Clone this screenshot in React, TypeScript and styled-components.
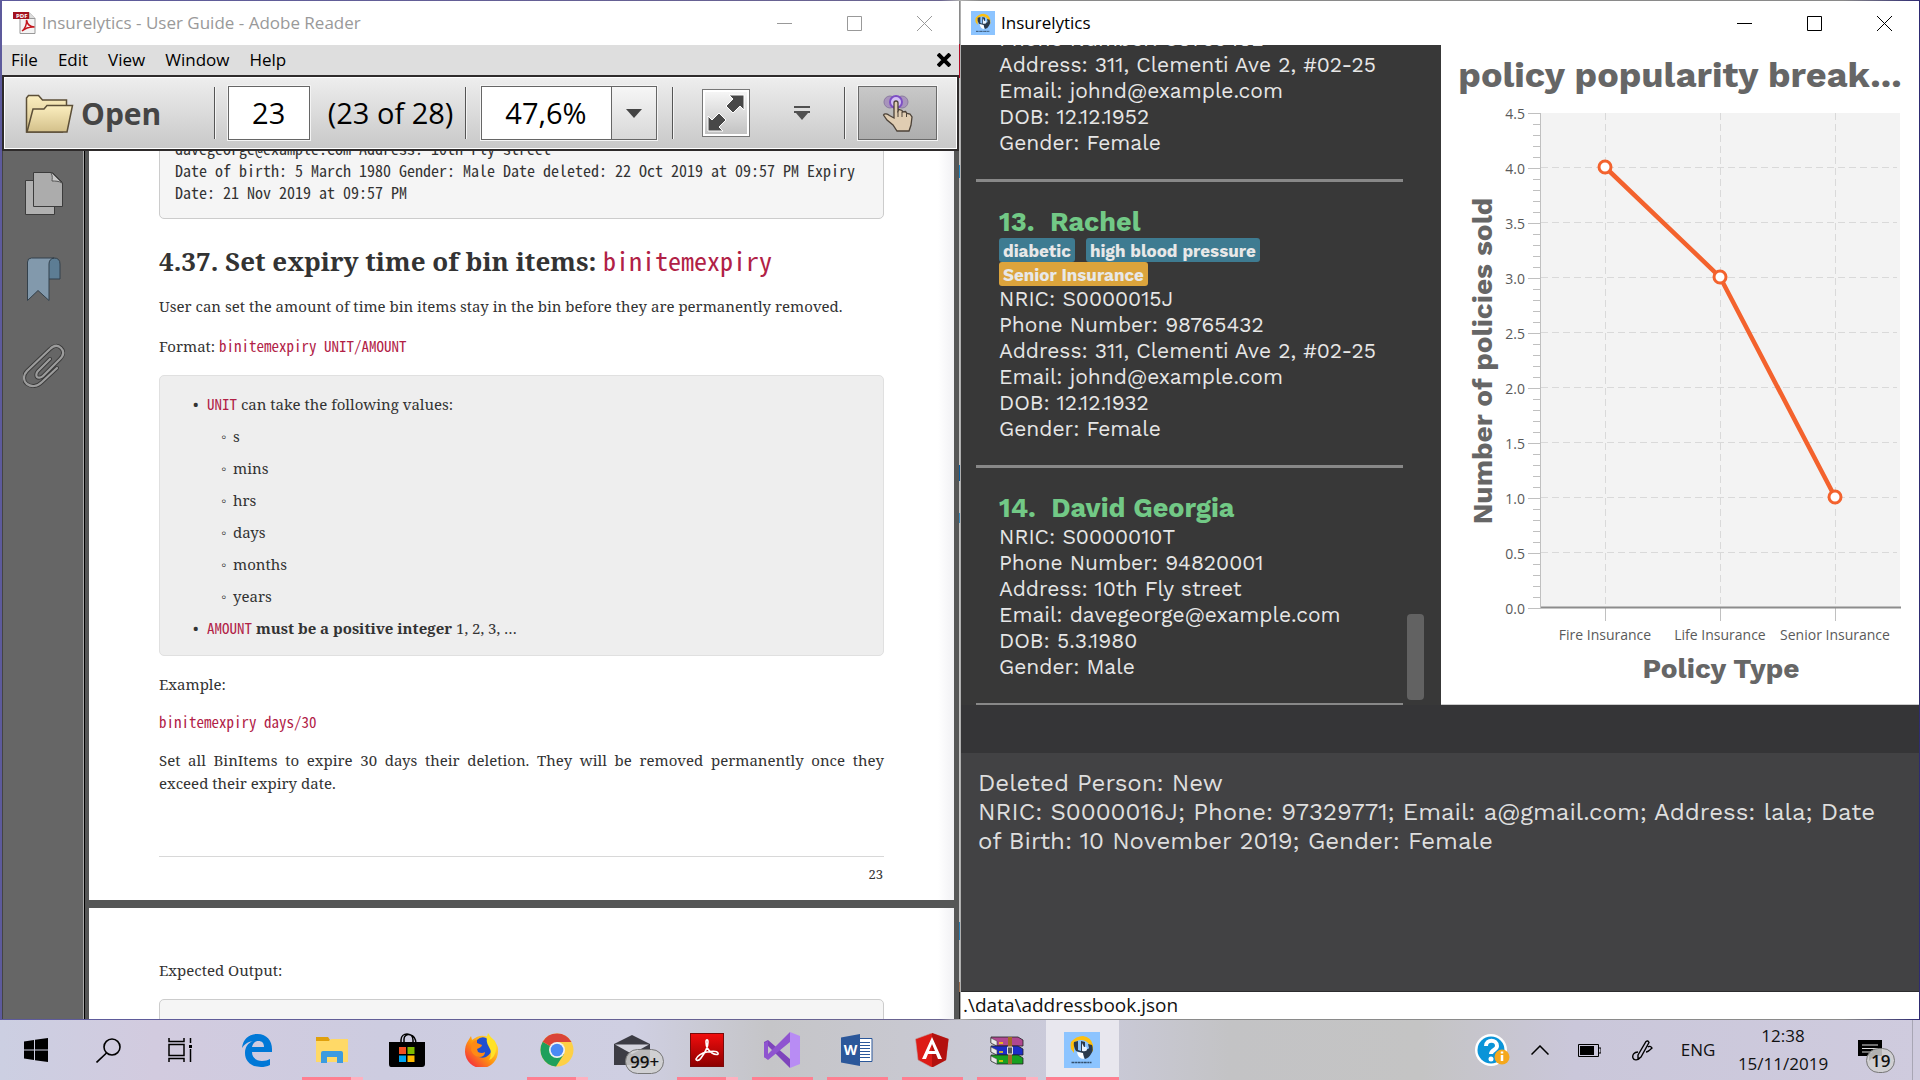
import React from 'react';
import styled, { createGlobalStyle, css } from 'styled-components';

const ui = '"Segoe UI", "Open Sans", "Noto Sans", sans-serif';
const work = '"Work Sans", Inter, "Open Sans", sans-serif';
const serif = '"Noto Serif", "Liberation Serif", serif';
const mono = '"Noto Sans Mono CJK JP", "Liberation Mono", monospace';

const GlobalStyle = createGlobalStyle`
  *, *::before, *::after { box-sizing: border-box; }
  body { margin: 0; font-family: ${ui}; overflow: hidden; }
  button, input, select { font: inherit; color: inherit; margin: 0; }
  h1, h2, h3, p, ul, pre, dl, dd { margin: 0; padding: 0; }
  button { background: none; border: 0; padding: 0; }
  svg { display: block; flex: none; }
`;

/* ---------- desktop ---------- */

const Desktop = styled.div`
  height: 100vh;
  display: flex;
  flex-direction: column;
  background: #4a4690;
`;

const Workspace = styled.main`
  flex: 1;
  min-height: 0;
  display: grid;
  grid-template-columns: minmax(0, 1fr) minmax(0, 1fr);
  gap: 1px;
  padding: 1px 1px 1px 2px;
  background: linear-gradient(90deg, #5d5a9c, #6a6490 49%, #b0b0b0 50%, #8a8a8a 51%, #8a8a8a 96%, #2e2a72);
`;

const Window = styled.section`
  min-width: 0;
  min-height: 0;
  display: flex;
  flex-direction: column;
  background: #fff;
`;

const TitleBar = styled.header<{ $active?: boolean }>`
  flex: none;
  height: 44px;
  display: flex;
  align-items: center;
  background: #fff;
  color: ${(p) => (p.$active ? '#000' : '#999')};
`;

const TitleText = styled.h1`
  flex: 1;
  font-size: 17px;
  line-height: 24px;
  font-weight: 400;
`;

const TitleIcon = styled.span`
  display: flex;
  margin: 0 6px 0 10px;
`;

const CaptionButton = styled.button`
  width: 70px;
  height: 44px;
  display: flex;
  align-items: center;
  justify-content: center;
`;

function CaptionButtons() {
  return (
    <>
      <CaptionButton aria-label="Minimize">
        <svg width="15" height="15" viewBox="0 0 15 15" stroke="currentColor"><path d="M0 7.5h15" /></svg>
      </CaptionButton>
      <CaptionButton aria-label="Maximize">
        <svg width="15" height="15" viewBox="0 0 15 15" fill="none" stroke="currentColor"><path d="M.5.5h14v14H.5z" /></svg>
      </CaptionButton>
      <CaptionButton aria-label="Close">
        <svg width="15" height="15" viewBox="0 0 15 15" stroke="currentColor"><path d="M0 0l15 15M15 0L0 15" /></svg>
      </CaptionButton>
    </>
  );
}

/* ---------- reader window ---------- */

const ReaderWindow = styled(Window)`
  border-right: 1px solid #b4b4b4;
  border-image: linear-gradient(#8a8a8a 0 44px, #b00a24 44px 78px, #c4c4c4 78px 165px, #1e88c8 165px 178px,
    #c4c4c4 178px 464px, #0a5c9c 464px 480px, #c4c4c4 480px 512px, #3a8cc0 512px 522px, #c4c4c4 522px 920px,
    #2a80b8 920px 938px, #c4c4c4 938px 980px, #a07050 980px 990px, #222 990px) 1;
`;

const MenuBar = styled.nav`
  flex: none;
  height: 30px;
  display: flex;
  align-items: center;
  background: #dedede;
  padding: 0 8px 0 9px;
  gap: 20px;
`;

const MenuItem = styled.button`
  font-size: 17px;
  line-height: 24px;
  color: #000;
`;

const MenuClose = styled.button`
  margin-left: auto;
`;

const Toolbar = styled.div`
  flex: none;
  height: 76px;
  display: flex;
  align-items: center;
  border: 2px solid #2e2b2b;
  box-shadow: inset 0 0 0 1px #fff;
  background: linear-gradient(#eeeeee, #c8c8c8);
  padding: 0 20px 0 21px;
`;

const Separator = styled.span`
  width: 2px;
  height: 52px;
  border-left: 1px solid #555;
  border-right: 1px solid #f4f4f4;
`;

const OpenButton = styled.button`
  width: 189px;
  display: flex;
  align-items: center;
  gap: 7px;
  padding-top: 2px;
  font-size: 30px;
  line-height: 40px;
  font-weight: 700;
  color: #454545;
`;

const PageInput = styled.input`
  width: 82px;
  height: 54px;
  margin: 0 18px 0 12px;
  border: 1px solid #666;
  outline: 1px solid #f4f4f4;
  border-radius: 0;
  padding: 0 0 2px;
  background: #fff;
  text-align: center;
  font-size: 29px;
  line-height: 40px;
  color: #000;
`;

const PageCount = styled.span`
  width: 138px;
  font-size: 29px;
  line-height: 40px;
  color: #000;
  white-space: nowrap;
`;

const ZoomGroup = styled.div`
  display: flex;
  width: 176px;
  height: 54px;
  margin: 0 15px 0 14px;
  border: 1px solid #666;
  outline: 1px solid #f4f4f4;
`;

const ZoomSelect = styled.select`
  width: 129px;
  border: 0;
  border-radius: 0;
  appearance: none;
  background: #fff;
  text-align: center;
  font-size: 29px;
  padding: 0 2px 2px 0;
  color: #000;
`;

const ZoomArrow = styled.button`
  flex: 1;
  display: flex;
  align-items: center;
  justify-content: center;
  border-left: 1px solid #666;
  background: linear-gradient(#f6f6f6, #d8d8d8);
`;

const FitButton = styled.button`
  width: 48px;
  height: 48px;
  margin: 0 43px 0 28px;
  display: flex;
  align-items: center;
  justify-content: center;
  border: 1px solid #777;
  box-shadow: inset 0 0 0 2px #fff;
  background: linear-gradient(#f8f8f8, #c0c0c0);
`;

const MoreButton = styled.button`
  margin-right: 33px;
`;

const TouchButton = styled.button`
  width: 79px;
  height: 54px;
  margin-left: 12px;
  display: flex;
  align-items: center;
  justify-content: center;
  border: 1px solid #6a6a6a;
  outline: 1px solid #f4f4f4;
  background: linear-gradient(#c8c8c8, #adadad);
`;

const ReaderBody = styled.div`
  flex: 1;
  min-height: 0;
  display: flex;
  background: #555656;
`;

const SideRail = styled.aside`
  flex: none;
  width: 83px;
  display: flex;
  flex-direction: column;
  align-items: center;
  gap: 42px;
  padding: 20px 0 0;
  background: #666;
  border-right: 1px solid #000;
  border-left: 1px solid #444;
  box-shadow: inset -1px 0 0 #aaa;
`;

const Pages = styled.div`
  flex: 1;
  min-width: 0;
  margin: 0 5px 0 4px;
  overflow: hidden;
  display: flex;
  flex-direction: column;
  gap: 8px;
`;

const Sheet = styled.article<{ $top?: number }>`
  flex: none;
  padding: ${(p) => p.$top ?? 0}px 70px 0;
  background: linear-gradient(270deg, #f1f1f4, #fff 16px);
  color: #333;
  font-family: ${serif};
  font-size: 15px;
  line-height: 23px;
`;

const CodeBlock = styled.pre<{ $open?: boolean }>`
  font-family: ${mono};
  font-size: 16px;
  line-height: 22px;
  border: 1px solid #ccc;
  border-radius: 5px;
  background: #f5f5f5;
  padding: 14px 15px 15px;
  ${(p) => (p.$open ? css`margin-top: 17px; min-height: 60px;` : css`margin-top: -29px;`)}
`;

const SectionTitle = styled.h2`
  margin-top: 22px;
  font-size: 26px;
  line-height: 40px;
  font-weight: 700;
`;

const Code = styled.code<{ $size?: number }>`
  font-family: ${mono};
  font-size: ${(p) => p.$size ?? 15}px;
  font-weight: 400;
  line-height: 1;
  color: #b12146;
`;

const Para = styled.p<{ $gap: number }>`
  margin-top: ${(p) => p.$gap}px;
  text-align: justify;
`;

const Note = styled.div`
  margin-top: 17px;
  padding: 12px 15px 11px;
  border: 1px solid #e0e0e0;
  border-radius: 5px;
  background: #eeeeee;
`;

const Bullets = styled.ul<{ $mark: string; $indent: number }>`
  list-style: none;
  line-height: 32px;
  padding-left: ${(p) => p.$indent}px;
  & > li { display: grid; grid-template-columns: ${(p) => (p.$mark === '•' ? 14 : 12)}px 1fr; }
  & > li::before { content: '${(p) => p.$mark}'; }
  & > li > ul { grid-column: 2; }
`;

const Footer = styled.footer`
  margin-top: 61px;
  padding: 6px 1px 14px;
  border-top: 1px solid #d8d8d8;
  text-align: right;
  font-size: 13px;
`;

/* ---------- insurelytics window ---------- */

const AppWindow = styled(Window)`
  background: #353537;
`;

const AppTop = styled.div`
  flex: none;
  display: grid;
  grid-template-columns: 480px minmax(0, 1fr);
  height: 660px;
`;

const PeoplePane = styled.div`
  display: flex;
  align-items: flex-end;
  min-height: 0;
  overflow: hidden;
  background: #383838;
  padding-left: 15px;
`;

const PeopleList = styled.ul`
  flex: none;
  width: 427px;
  list-style: none;
  margin-bottom: -1px;
`;

const PersonCard = styled.li`
  padding: 24px 23px 23px;
  border-bottom: 3px solid #888;
  font-family: ${work};
  font-size: 21px;
  line-height: 26px;
  color: #e6e6e6;
  white-space: nowrap;
`;

const PersonName = styled.h2`
  font-size: 27px;
  line-height: 32px;
  font-weight: 700;
  color: #72c986;
  white-space: pre;
`;

const TagRow = styled.div`
  display: flex;
  gap: 11px;
`;

const Tag = styled.span<{ $tone: string }>`
  height: 24px;
  padding: 0 4px;
  border-radius: 3px;
  background: ${(p) => p.$tone};
  font-size: 17px;
  line-height: 26px;
  font-weight: 700;
  color: #e8e8e8;
`;

const ScrollThumb = styled.span`
  width: 17px;
  height: 86px;
  margin: 0 0 5px 4px;
  border-radius: 4px;
  background: #626262;
`;

const ChartPane = styled.figure`
  margin: 0;
  padding-top: 10px;
  background: #fff;
  border-bottom: 1px solid #ccc;
  font-family: ${work};
  color: #666;
`;

const ChartTitle = styled.figcaption`
  height: 41px;
  font-size: 36px;
  line-height: 40px;
  font-weight: 700;
  text-align: center;
  white-space: nowrap;
`;

const Result = styled.output`
  flex: 1;
  margin-top: 48px;
  padding: 16px 17px;
  background: #424244;
  border-bottom: 1px solid #2c2c2e;
  font-family: ${work};
  font-size: 24px;
  line-height: 29px;
  color: #dedede;
  white-space: pre-line;
`;

const StatusBar = styled.footer`
  flex: none;
  height: 27px;
  padding-left: 2px;
  background: #fff;
  color: #111;
  font-size: 19px;
  line-height: 27px;
`;

const points = [
  { label: 'Fire Insurance', value: 4 },
  { label: 'Life Insurance', value: 3 },
  { label: 'Senior Insurance', value: 1 },
];

function PolicyChart() {
  const x0 = 100;
  const top = 17;
  const bottom = 512;
  const y = (v: number) => bottom - v * 110;
  const x = (i: number) => 164 + i * 115;
  const ticks = Array.from({ length: 46 }, (_, i) => i / 10);
  const majors = Array.from({ length: 10 }, (_, i) => i / 2);
  return (
    <svg width="100%" viewBox="0 0 478 600" role="img" aria-label="Policies sold by policy type">
      <rect x={x0} y={top} width="359" height={bottom - top} fill="#f3f3f3" />
      <g stroke="#d9d9d9" strokeDasharray="7 4">
        {majors.slice(1, 9).map((v) => <path key={v} d={`M${x0} ${y(v) - 0.5}H456`} />)}
        {points.map((p, i) => <path key={p.label} d={`M${x(i) + 0.5} ${top}V${bottom}`} />)}
      </g>
      <g stroke="#c0c0c0">
        <path d={`M${x0 - 0.5} ${top}V${bottom + 1}`} />
        {ticks.map((v, i) => <path key={v} d={`M${i % 5 ? 92 : 87} ${y(v) + 0.5}H${x0}`} />)}
        {points.map((p, i) => <path key={p.label} d={`M${x(i) + 0.5} ${bottom}v13`} />)}
      </g>
      <path d={`M${x0} ${bottom - 0.5}H460`} stroke="#8c8c8c" strokeWidth="2" />
      <g fontFamily={ui} fontSize="14" fill="#5a5a5a" textAnchor="end">
        {majors.map((v) => <text key={v} x="84" y={y(v) + 6}>{v.toFixed(1)}</text>)}
      </g>
      <g fontFamily={ui} fontSize="14" fill="#5a5a5a" textAnchor="middle">
        {points.map((p, i) => <text key={p.label} x={x(i)} y="544">{p.label}</text>)}
      </g>
      <path d={points.map((p, i) => `${i ? 'L' : 'M'}${x(i)} ${y(p.value) - 1}`).join('')} fill="none" stroke="#f3622d" strokeWidth="4.5" />
      {points.map((p, i) => <circle key={p.label} cx={x(i)} cy={y(p.value) - 1} r="6" fill="#fff" stroke="#f3622d" strokeWidth="3" />)}
      <g fontFamily={work} fontSize="28" fontWeight="700" fill="#666" textAnchor="middle">
        <text x="280" y="582">Policy Type</text>
        <text transform="translate(51 265) rotate(-90)">Number of policies sold</text>
      </g>
    </svg>
  );
}

/* ---------- taskbar ---------- */

const Taskbar = styled.footer`
  flex: none;
  height: 60px;
  display: flex;
  color: #111;
  background: linear-gradient(90deg, #cccfe2 0, #d2cbdf 8%, #cdcce0 20%, #cfcfe2 33%, #c5c5c8 40%, #c8c8d0 47%,
    #cbcbdc 56%, #c3c3c5 64%, #c4c4c4 74%, #cac7da 82%, #cfcbde 100%);
`;

const SystemButton = styled.button`
  width: 72px;
  display: flex;
  align-items: center;
  justify-content: center;
`;

const Apps = styled.div`
  display: flex;
  gap: 2px;
  margin-left: 5px;
`;

const AppButton = styled.button<{ $state?: 'open' | 'many' | 'active' }>`
  width: 73px;
  height: 60px;
  padding-right: 1px;
  display: flex;
  align-items: center;
  justify-content: center;
  position: relative;
  background: ${(p) => (p.$state === 'active' ? '#e8e7ee' : 'transparent')};
  &::after {
    content: '';
    position: absolute;
    bottom: 0;
    left: ${(p) => (p.$state === 'active' ? 0 : 6)}px;
    right: ${(p) => (p.$state === 'active' ? 0 : 6)}px;
    height: 3px;
    background: ${(p) =>
      !p.$state ? 'none' : p.$state === 'many' ? 'linear-gradient(90deg, #ff7f91 0 49px, #ffb0bf 49px)' : '#ff7f91'};
  }
`;

const Badge = styled.span<{ $left: number; $top: number }>`
  position: absolute;
  left: ${(p) => p.$left}px;
  top: ${(p) => p.$top}px;
  min-width: 28px;
  height: 25px;
  padding: 0 4px;
  border: 1px solid #777;
  border-radius: 13px;
  background: rgba(208, 208, 208, 0.85);
  font-size: 17px;
  line-height: 23px;
  font-weight: 600;
  color: #111;
`;

const Tray = styled.div`
  margin-left: auto;
  display: flex;
  align-items: center;
`;

const TrayButton = styled.button<{ $w: number; $end?: number }>`
  width: ${(p) => p.$w}px;
  height: 60px;
  padding-right: ${(p) => p.$end ?? 0}px;
  position: relative;
  display: flex;
  align-items: center;
  justify-content: center;
  font-size: 17px;
  line-height: 28px;
`;

const Clock = styled.time`
  width: 114px;
  padding-right: 6px;
  text-align: center;
  font-size: 17px;
  line-height: 28px;
`;

const ShowDesktop = styled.button`
  width: 8px;
  height: 60px;
  border-left: 1px solid #a8a6b4;
`;

/* ---------- icons ---------- */

function InsureLogo({ size }: { size: number }) {
  return (
    <svg width={size} height={size} viewBox="0 0 36 36">
      <rect width="36" height="36" fill="#8cc4ff" />
      <path d="M7 10Q12 4 19 4q8 1 10 9v6l-4 3V12q-3-4-8-4-5 0-7 4v9l-3-4q-1-4 0-7z" fill="#fdc010" />
      <path d="M10 10l4-1v9l3 1V9l4 1v7q3 1 4-1l-1-4 4 1q2 5-1 9-2 4-6 5l-3-6-6-2q-3-5-2-9z" fill="#2b3a4c" />
      <path d="M13 20l6 1 1 6q-6 0-7-7z" fill="#fff" />
      <path d="M18 11v8q5 1 5-2 0-3-3-2z" fill="#e8f3ff" />
      <path d="M7.500 30.500h20" stroke="#33506e" strokeWidth="1.500" strokeDasharray="3 .6 2 .5" />
    </svg>
  );
}

const PdfIcon = () => (
  <svg width="24" height="24" viewBox="0 0 24 24">
    <path d="M8 1.500h9l6 6v15H8z" fill="#f4f4f4" stroke="#999" />
    <path d="M17 1.500v6h6" fill="#ddd" stroke="#999" />
    <rect x="1" y="1" width="16" height="7" fill="#a3121f" />
    <text x="4" y="6.500" fontFamily={ui} fontSize="6" fontWeight="700" fill="#fff">PDF</text>
    <path d="M10 20c3-2 5-7 4.500-11 1 5 4 7 8 7-5-.5-9 1-12.500 4z" fill="none" stroke="#c4161c" strokeWidth="1.500" />
  </svg>
);

const FolderIcon = () => (
  <svg width="49" height="40" viewBox="0 0 49 40">
    <defs>
      <linearGradient id="fold" x1="0" y1="0" x2="0" y2="1"><stop stopColor="#fbeebf" /><stop offset="1" stopColor="#d3c08a" /></linearGradient>
    </defs>
    <path d="M1.500 38V4l2-2.500h10l4 4.500h24v8l-4 24z" fill="url(#fold)" stroke="#5c4f38" strokeWidth="1.500" />
    <path d="M2 38l6-23h11l3-3.500h25.500L42 38z" fill="url(#fold)" stroke="#5c4f38" strokeWidth="1.500" />
  </svg>
);

const FitIcon = () => (
  <svg width="38" height="38" viewBox="0 0 38 38" fill="#484848" stroke="#fff">
    <path d="M22 1h15v15l-4-4-7 7-7-7 7-7z" />
    <path d="M1 22l4 4 7-7 7 7-7 7 4 4H1z" />
  </svg>
);

const TouchIcon = () => (
  <svg width="32" height="38" viewBox="0 0 32 38">
    <circle cx="8" cy="8" r="6" fill="#a894bc" stroke="#8c7ca0" />
    <circle cx="20" cy="8" r="6" fill="#a894bc" stroke="#8c7ca0" />
    <circle cx="14" cy="8" r="6" fill="#d4bff4" stroke="#7d4fc4" strokeWidth="2" />
    <path d="M12 9a2 2 0 0 1 4 0v8l1-1.500 3 1 .5 1.500 3-.5 1.500 2 3 .5 2 3-1 8-2 6H15l-4-6-6-5-3.500-5c1-2 4-1 6 .5L12 24z" fill="#e0cdb2" stroke="#4c4238" strokeWidth="1.300" />
    <path d="M16 17v6M20 18v5M24.500 19v4" stroke="#4c4238" />
  </svg>
);

const PagesIcon = () => (
  <svg width="40" height="44" viewBox="0 0 40 44">
    <path d="M1.500 9.500h29v34h-29z" fill="#b0b0b0" stroke="#3c3c3c" />
    <path d="M9.500 1.500h19l10 10v24h-29z" fill="#acacac" stroke="#3c3c3c" />
    <path d="M27 2c2 3 1 6 1 8 3 0 7 0 10 2L28 2z" fill="#c8c8c8" stroke="#555" />
  </svg>
);

const BookmarkIcon = () => (
  <svg width="36" height="44" viewBox="0 0 36 44">
    <path d="M22 4q2-3 6-3 6 0 6 6v15H22z" fill="#5d7d94" stroke="#33414c" />
    <path d="M1.500 43.500V5q0-4 4-4H28q-5 1-5 6v36.500L12 33.500z" fill="#8299ac" stroke="#33414c" />
  </svg>
);

const ClipIcon = () => {
  const d = 'M34 25L19 39c-5 5-11 5-15 2s-4-9 0-13L27 6c4-4 8-4 11-1s3 7-1 11L20 33c-2 2-5 2-6 1s-1-4 1-6l12-12';
  return (
    <svg width="42" height="46" viewBox="0 0 42 46" fill="none" strokeLinecap="round">
      <path d={d} stroke="#3a3a3a" strokeWidth="4" />
      <path d={d} stroke="#9c9c9c" strokeWidth="2.200" />
    </svg>
  );
};

const EdgeIcon = () => (
  <svg width="32" height="34" viewBox="0 0 32 34">
    <path d="M1 15C2 6 8 1 16.500 1 26 1 31 8 31 16v3H11c0 6 5 9 10 9 3 0 6-1 8-2v6c-3 1.500-6 2-9 2C10 34 4 28 4 20c0-6 3-10 8-12-6 1-9 4-11 7zM11 14h12c0-4-2-6-5.500-6S12 10 11 14z" fill="#0078d7" />
  </svg>
);

const ExplorerIcon = () => (
  <svg width="34" height="28" viewBox="0 0 34 28">
    <path d="M1 1h12l2 3-2 3H1z" fill="#e0a00c" />
    <path d="M1 5h13l2-2h17v23H1z" fill="#ffd967" />
    <path d="M6 27V17q0-2 2-2h18q2 0 2 2v10h-6v-6h-10v6z" fill="#3c9be0" />
  </svg>
);

const StoreIcon = () => (
  <svg width="36" height="34" viewBox="0 0 36 34">
    <path d="M12 11V7c0-8 12-8 12 0v4M15 11V6c0-7 12-6 12 5" fill="none" stroke="#000" strokeWidth="1.500" />
    <path d="M0 9h36v22q0 3-3 3H2q-2 0-2-3z" fill="#000" />
    <path d="M10 14h7v7h-7z" fill="#f25022" /><path d="M18.500 14h7v7h-7z" fill="#7fba00" />
    <path d="M10 22.500h7v6.500h-7z" fill="#00a4ef" /><path d="M18.500 22.500h7v6.500h-7z" fill="#ffb900" />
  </svg>
);

const FirefoxIcon = () => (
  <svg width="34" height="34" viewBox="0 0 34 34">
    <defs>
      <linearGradient id="ff" x1="1" y1="0" x2="0" y2="1"><stop stopColor="#fff04c" /><stop offset=".5" stopColor="#ff980e" /><stop offset="1" stopColor="#f1104c" /></linearGradient>
    </defs>
    <path d="M3 8l3-5 1 4q10-8 20-1 7 6 6 12a16.500 16.500 0 0 1-33 1Q0 12 3 8z" fill="url(#ff)" />
    <path d="M12 7q4-4 9-2 5 3 6 8 0 8-6 11-6 2-10-2l-1-6 5-3-4-2z" fill="#1f4fd0" />
    <path d="M7 10q2-3 5-3l0 3 5 2q0 2-5 4l1 3q4 2 7 0 0 5-6 5-6-1-8-7z" fill="#ff8a16" />
    <path d="M23 0q2 4 7 8 3 8-1 15-2 3-5 4 4-7 0-13-4-6-1-14z" fill="#ffe226" />
  </svg>
);

const ChromeIcon = () => (
  <svg width="34" height="34" viewBox="0 0 34 34">
    <circle cx="17" cy="17" r="16.500" fill="#fdd046" />
    <path d="M17 17L2.700 8.800A16.500 16.500 0 0 0 16 33.500L24 21z" fill="#1fa05c" />
    <path d="M17 17L2.700 8.800A16.500 16.500 0 0 1 31.500 9H17z" fill="#da4437" />
    <circle cx="17" cy="17" r="8" fill="#f1f1f1" />
    <circle cx="17" cy="17" r="6.300" fill="#4a8af4" />
  </svg>
);

const MailIcon = () => (
  <svg width="36" height="30" viewBox="0 0 36 30">
    <path d="M0 9L18 0l18 9v21H0z" fill="#3c3c44" />
    <path d="M1 9.500h34L18 19z" fill="#d4d4de" />
  </svg>
);

const AcrobatIcon = () => (
  <svg width="34" height="34" viewBox="0 0 34 34">
    <defs><linearGradient id="acr" x1="0" y1="0" x2="0" y2="1"><stop stopColor="#f20d0d" /><stop offset="1" stopColor="#8c0000" /></linearGradient></defs>
    <rect x=".5" y=".5" width="33" height="33" fill="url(#acr)" stroke="#7a0a0a" />
    <path d="M6 26c2-4 6-6 11-7s10-1 11 1-3 2-6 0-6-6-6-11c0-3 2-3 2 0 0 5-4 12-7 16-2 3-5 3-5 1z" fill="none" stroke="#fff" strokeWidth="1.600" />
  </svg>
);

const StudioIcon = () => (
  <svg width="36" height="36" viewBox="0 0 36 36">
    <path d="M26 0l10 4v28l-10 4z" fill="#b88cf4" />
    <path d="M0 10l4-2 22 19v9L4 14v13l-4-2z" fill="#7e44bc" />
    <path d="M0 25l4 3L26 10V0L4 22V9l-4 2z" fill="#8f54d0" />
  </svg>
);

const WordIcon = () => (
  <svg width="32" height="32" viewBox="0 0 32 32">
    <path d="M17 4.500h14v23H17z" fill="#fff" stroke="#2b579a" />
    <path d="M19 8.500h10M19 11.500h10M19 14.500h10M19 17.500h10M19 20.500h10M19 23.500h10" stroke="#2b579a" />
    <path d="M0 3.500L19 0v32L0 28.500z" fill="#2b579a" />
    <text x="9.500" y="21" textAnchor="middle" fontFamily={ui} fontSize="14" fontWeight="700" fill="#fff">W</text>
  </svg>
);

const AngularIcon = () => (
  <svg width="34" height="34" viewBox="0 0 34 34">
    <path d="M17 0l16.500 6L31 27l-14 7.500L3 27 .5 6z" fill="#dd1b16" stroke="#b8a8a8" strokeWidth=".6" />
    <path d="M17 0l16.500 6L31 27l-14 7.500z" fill="#b3110e" />
    <path d="M17 4L7 26h4l2-5h8l2 5h4zm0 7l3 7h-6z" fill="#fff" />
  </svg>
);

const RarIcon = () => (
  <svg width="34" height="29" viewBox="0 0 34 29">
    {[['#b04890', 1], ['#1c2cc8', 10], ['#18a020', 19]].map(([c, y]) => (
      <g key={c}>
        <path d={`M1 ${+y}h27l5 3v6H7l-6-3z`} fill={c as string} stroke="#222" strokeWidth=".8" />
        <path d={`M1 ${+y + 1}l6 3v5l-6-3z`} fill="#e8e8e8" stroke="#444" strokeWidth=".6" />
        <path d={`M9 ${+y + 6}h4`} stroke="#ffd800" strokeWidth="1.500" />
      </g>
    ))}
    <path d="M18 1h4v27h-4z" fill="#a06a28" />
    <path d="M17.500 11h5v7h-5z" fill="#555" stroke="#ddd" />
  </svg>
);

const apps: { name: string; icon: React.ReactNode; state?: 'open' | 'many' | 'active'; badge?: string }[] = [
  { name: 'Edge', icon: <EdgeIcon /> },
  { name: 'File Explorer', icon: <ExplorerIcon />, state: 'many' },
  { name: 'Store', icon: <StoreIcon /> },
  { name: 'Firefox', icon: <FirefoxIcon /> },
  { name: 'Chrome', icon: <ChromeIcon />, state: 'many' },
  { name: 'Mail', icon: <MailIcon />, badge: '99+' },
  { name: 'Adobe Reader', icon: <AcrobatIcon />, state: 'many' },
  { name: 'Visual Studio', icon: <StudioIcon />, state: 'open' },
  { name: 'Word', icon: <WordIcon />, state: 'open' },
  { name: 'Angular', icon: <AngularIcon />, state: 'open' },
  { name: 'WinRAR', icon: <RarIcon />, state: 'many' },
  { name: 'Insurelytics', icon: <InsureLogo size={36} />, state: 'active' },
];

/* ---------- data ---------- */

interface Person {
  id: number;
  title?: string;
  tags?: string[];
  policies?: string[];
  details: string[];
}

const people: Person[] = [
  {
    id: 12,
    details: ['Phone Number: 98765432', 'Address: 311, Clementi Ave 2, #02-25', 'Email: johnd@example.com', 'DOB: 12.12.1952', 'Gender: Female'],
  },
  {
    id: 13,
    title: '13.  Rachel',
    tags: ['diabetic', 'high blood pressure'],
    policies: ['Senior Insurance'],
    details: ['NRIC: S0000015J', 'Phone Number: 98765432', 'Address: 311, Clementi Ave 2, #02-25', 'Email: johnd@example.com', 'DOB: 12.12.1932', 'Gender: Female'],
  },
  {
    id: 14,
    title: '14.  David Georgia',
    details: ['NRIC: S0000010T', 'Phone Number: 94820001', 'Address: 10th Fly street', 'Email: davegeorge@example.com', 'DOB: 5.3.1980', 'Gender: Male'],
  },
];

function Reader() {
  return (
    <ReaderWindow>
      <TitleBar>
        <TitleIcon><PdfIcon /></TitleIcon>
        <TitleText>Insurelytics - User Guide - Adobe Reader</TitleText>
        <CaptionButtons />
      </TitleBar>
      <MenuBar>
        {['File', 'Edit', 'View', 'Window', 'Help'].map((m) => <MenuItem key={m}>{m}</MenuItem>)}
        <MenuClose aria-label="Close document">
          <svg width="14" height="14" viewBox="0 0 14 14" stroke="#000" strokeWidth="4"><path d="M1 1l12 12M13 1L1 13" /></svg>
        </MenuClose>
      </MenuBar>
      <Toolbar>
        <OpenButton><FolderIcon />Open</OpenButton>
        <Separator />
        <PageInput aria-label="Page" defaultValue="23" />
        <PageCount>(23 of 28)</PageCount>
        <Separator />
        <ZoomGroup>
          <ZoomSelect aria-label="Zoom" defaultValue="47,6%"><option>47,6%</option></ZoomSelect>
          <ZoomArrow aria-label="Zoom levels">
            <svg width="16" height="9" viewBox="0 0 16 9"><path d="M0 0h16L8 9z" fill="#444" /></svg>
          </ZoomArrow>
        </ZoomGroup>
        <Separator />
        <FitButton aria-label="Full screen"><FitIcon /></FitButton>
        <MoreButton aria-label="More tools">
          <svg width="18" height="17" viewBox="0 0 18 17" fill="#505050"><path d="M1 1h16v2H1zM1 6h16v2H1zM3 8h12l-6 7z" /></svg>
        </MoreButton>
        <Separator />
        <TouchButton aria-label="Touch mode"><TouchIcon /></TouchButton>
      </Toolbar>
      <ReaderBody>
        <SideRail><PagesIcon /><BookmarkIcon /><ClipIcon /></SideRail>
        <Pages>
          <Sheet>
            <CodeBlock>{'davegeorge@example.com Address: 10th Fly street\nDate of birth: 5 March 1980 Gender: Male Date deleted: 22 Oct 2019 at 09:57 PM Expiry\nDate: 21 Nov 2019 at 09:57 PM'}</CodeBlock>
            <SectionTitle>4.37. Set expiry time of bin items: <Code $size={26}>binitemexpiry</Code></SectionTitle>
            <Para $gap={14}>User can set the amount of time bin items stay in the bin before they are permanently removed.</Para>
            <Para $gap={17}>Format: <Code>binitemexpiry UNIT/AMOUNT</Code></Para>
            <Note>
              <Bullets $mark="•" $indent={18}>
                <li>
                  <span><Code>UNIT</Code> can take the following values:</span>
                  <Bullets $mark="◦" $indent={14}>
                    {['s', 'mins', 'hrs', 'days', 'months', 'years'].map((u) => <li key={u}>{u}</li>)}
                  </Bullets>
                </li>
                <li><span><Code>AMOUNT</Code> <b>must be a positive integer</b> 1, 2, 3, …</span></li>
              </Bullets>
            </Note>
            <Para $gap={17}>Example:</Para>
            <Para $gap={15}><Code>binitemexpiry days/30</Code></Para>
            <Para $gap={15}>Set all BinItems to expire 30 days their deletion. They will be removed permanently once they exceed&nbsp;their expiry date.</Para>
            <Footer>23</Footer>
          </Sheet>
          <Sheet $top={51}>
            <Para $gap={0}>Expected Output:</Para>
            <CodeBlock $open />
          </Sheet>
        </Pages>
      </ReaderBody>
    </ReaderWindow>
  );
}

function Insurelytics() {
  return (
    <AppWindow>
      <TitleBar $active>
        <TitleIcon><InsureLogo size={24} /></TitleIcon>
        <TitleText>Insurelytics</TitleText>
        <CaptionButtons />
      </TitleBar>
      <AppTop>
        <PeoplePane>
          <PeopleList>
            {people.map((p) => (
              <PersonCard key={p.id}>
                {p.title && <PersonName>{p.title}</PersonName>}
                {p.tags && <TagRow>{p.tags.map((t) => <Tag key={t} $tone="#3e7b91">{t}</Tag>)}</TagRow>}
                {p.policies && <TagRow>{p.policies.map((t) => <Tag key={t} $tone="#dca43c">{t}</Tag>)}</TagRow>}
                {p.details.map((d) => <p key={d}>{d}</p>)}
              </PersonCard>
            ))}
          </PeopleList>
          <ScrollThumb />
        </PeoplePane>
        <ChartPane>
          <ChartTitle>policy popularity break...</ChartTitle>
          <PolicyChart />
        </ChartPane>
      </AppTop>
      <Result>{'Deleted Person: New\nNRIC: S0000016J; Phone: 97329771; Email: a@gmail.com; Address: lala; Date of Birth: 10 November 2019; Gender: Female'}</Result>
      <StatusBar>.\data\addressbook.json</StatusBar>
    </AppWindow>
  );
}

export default function App() {
  return (
    <Desktop>
      <GlobalStyle />
      <Workspace>
        <Reader />
        <Insurelytics />
      </Workspace>
      <Taskbar>
        <SystemButton aria-label="Start">
          <svg width="24" height="24" viewBox="0 0 24 24"><path d="M0 3.500L10 2v9.500H0zM11 1.800L24 0v11.500H11zM0 12.500h10V22L0 20.500zM11 12.500h13V24l-13-1.800z" /></svg>
        </SystemButton>
        <SystemButton aria-label="Search">
          <svg width="25" height="25" viewBox="0 0 25 25" fill="none" stroke="#000" strokeWidth="1.600"><circle cx="16" cy="9" r="8" /><path d="M10.500 15L.5 24.500" /></svg>
        </SystemButton>
        <SystemButton aria-label="Task view">
          <svg width="24" height="24" viewBox="0 0 24 24" fill="none" stroke="#000" strokeWidth="1.500"><path d="M1 0v3.500h15V0M1 24v-3.500h15V24M1 6.500h15v11H1zM22.500 0v5M22.500 11v13" /><path d="M21 7h3v3h-3z" fill="#000" stroke="none" /></svg>
        </SystemButton>
        <Apps>
          {apps.map((a) => (
            <AppButton key={a.name} $state={a.state} aria-label={a.name}>
              {a.icon}
              {a.badge && <Badge $left={29} $top={29}>{a.badge}</Badge>}
            </AppButton>
          ))}
        </Apps>
        <Tray>
          <TrayButton $w={54} aria-label="Get help">
            <svg width="36" height="34" viewBox="0 0 36 34">
              <circle cx="17" cy="17" r="16" fill="#fff" /><circle cx="17" cy="17" r="13.500" fill="#0a94d8" />
              <path d="M12 13c0-7 11-7 11 0 0 4-6 4-6 8" fill="none" stroke="#fff" strokeWidth="4" /><circle cx="17" cy="26" r="2.500" fill="#fff" />
              <circle cx="28" cy="24" r="7.500" fill="#f5a81c" /><path d="M28 22v6M28 18.500v2" stroke="#fff" strokeWidth="2.500" />
            </svg>
          </TrayButton>
          <TrayButton $w={42} aria-label="Show hidden icons">
            <svg width="18" height="10" viewBox="0 0 18 10" fill="none" stroke="#000" strokeWidth="1.500"><path d="M.5 9.500L9 1l8.500 8.500" /></svg>
          </TrayButton>
          <TrayButton $w={56} aria-label="Battery">
            <svg width="23" height="13" viewBox="0 0 23 13"><path d="M.5.5h20v12H.5zM21 4h2v5h-2" fill="none" stroke="#000" /><path d="M2 2h14v9H2z" /></svg>
          </TrayButton>
          <TrayButton $w={50} aria-label="Windows Ink">
            <svg width="21" height="21" viewBox="0 0 21 21" fill="none" stroke="#000" strokeWidth="1.400"><path d="M6 15L14 1.500q2-1.500 3 1L9 17l-3 2zM6 12c-4 0-6 3-5 6s5 2 7 0M14 12c2 0 5-3 6-4-1-2-3-2-4-1" /></svg>
          </TrayButton>
          <TrayButton $w={62}>ENG</TrayButton>
          <Clock>12:38<br />15/11/2019</Clock>
          <TrayButton $w={69} $end={15} aria-label="Notifications">
            <svg width="24" height="21" viewBox="0 0 24 21"><path d="M0 0h24v16h-8l-5 5v-5H0z" /><path d="M4 5h16M4 8.500h16M4 12h10" stroke="#ddd" /></svg>
            <Badge $left={23} $top={28}>19</Badge>
          </TrayButton>
          <ShowDesktop aria-label="Show desktop" />
        </Tray>
      </Taskbar>
    </Desktop>
  );
}
